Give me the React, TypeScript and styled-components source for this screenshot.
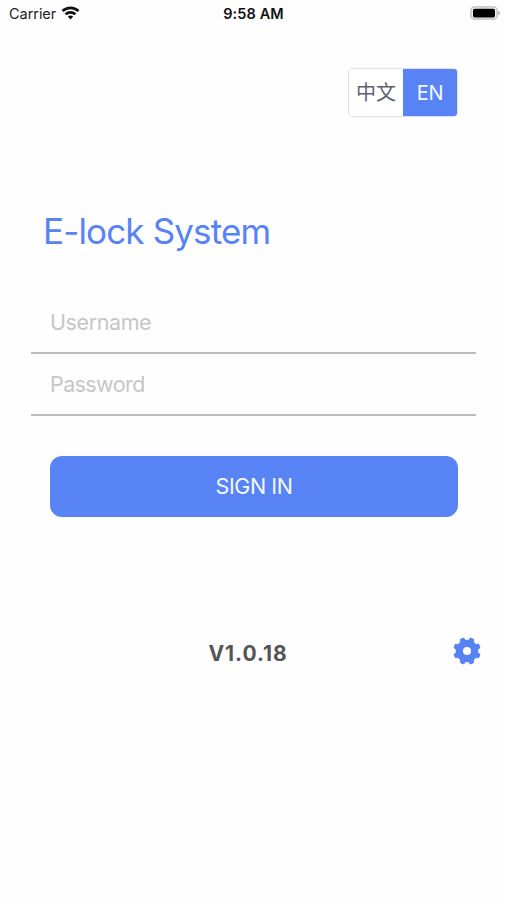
import React, { useState } from "react";
import styled, { createGlobalStyle } from "styled-components";

const BLUE = "#5783f5";

const GlobalStyle = createGlobalStyle`
  * { box-sizing: border-box; }
  body { margin: 0; background: #fefefe; font-family: Inter, "Noto Sans CJK SC", sans-serif; }
  button, input { font-family: inherit; }
`;

const Screen = styled.main`
  width: 507px;
  height: 900px;
  background: #fefefe;
  display: flex;
  flex-direction: column;
  overflow: hidden;
`;

const StatusBar = styled.header`
  height: 28px;
  padding: 0 6px 0 9px;
  display: grid;
  grid-template-columns: 1fr auto 1fr;
  align-items: center;
  color: #222;
  font-size: 14.5px;
  line-height: 28px;
`;

const Carrier = styled.div`
  display: flex;
  align-items: center;
  gap: 5px;
  letter-spacing: -0.05px;
  svg { margin-top: -3px; }
`;

const Clock = styled.time`
  font-weight: 600;
  letter-spacing: 0.12px;
  padding-right: 3px;
  color: #111;
`;

const BatterySlot = styled.div`
  display: flex;
  justify-content: flex-end;
  margin-top: -2px;
`;

const LanguageSwitch = styled.div`
  align-self: flex-end;
  display: flex;
  width: 110px;
  height: 49px;
  margin: 40px 49px 0 0;
  border: 1px solid #dfe1e6;
  border-radius: 4px;
  overflow: hidden;
`;

const LanguageOption = styled.button<{ $active: boolean }>`
  flex: 0 0 54px;
  padding: 0;
  border: 0;
  font-size: 20px;
  line-height: 46px;
  letter-spacing: ${(p) => (p.$active ? "-0.4px" : "0")};
  color: ${(p) => (p.$active ? "#f4f8ff" : "#5c626d")};
  background: ${(p) => (p.$active ? BLUE : "#fff")};
`;

const Title = styled.h1`
  margin: 92px 0 0 43px;
  font-size: 35px;
  line-height: 44px;
  font-weight: 400;
  letter-spacing: -0.85px;
  color: ${BLUE};
`;

const Form = styled.form`
  margin: 39px 31px 0;
  display: flex;
  flex-direction: column;
`;

const Field = styled.input<{ $tracking: number }>`
  height: 62px;
  padding: 0 19px;
  border: 0;
  border-bottom: 2px solid #bdbdbf;
  border-radius: 0;
  outline: 0;
  background: transparent;
  font-size: 21.5px;
  letter-spacing: ${(p) => p.$tracking}px;
  color: #444;
  &::placeholder { color: #c6c6c8; opacity: 1; }
`;

const SignIn = styled.button`
  height: 61px;
  margin: 39.5px 18px 0 19px;
  padding: 0;
  border: 0;
  border-radius: 12px;
  background: ${BLUE};
  color: #f4f8ff;
  font-size: 21.5px;
  letter-spacing: -0.4px;
`;

const Footer = styled.footer`
  display: grid;
  grid-template-columns: 1fr auto 1fr;
  align-items: center;
  margin: 116px 26px 0 15px;
  height: 32px;
`;

const Version = styled.span`
  grid-column: 2;
  font-size: 21px;
  font-weight: 700;
  line-height: 32px;
  letter-spacing: 0.95px;
  padding-top: 5px;
  color: #555;
`;

const SettingsButton = styled.button`
  justify-self: end;
  display: flex;
  padding: 0;
  border: 0;
  background: none;
`;

function WifiIcon() {
  return (
    <svg width="19" height="14" viewBox="0 0 18 14" fill="none" stroke="#111" strokeWidth="2.7">
      <path d="M1 5.1C5.5.8 12.5.8 17 5.1" />
      <path d="M4.1 8.3c2.8-2.6 7-2.6 9.8 0" />
      <path d="M9 13.4 6.3 10.6c1.5-1.4 3.9-1.4 5.4 0Z" fill="#111" stroke="none" />
    </svg>
  );
}

function BatteryIcon() {
  return (
    <svg width="31" height="14" viewBox="0 0 31 14">
      <rect x="0.9" y="0.9" width="26.2" height="12.2" rx="3.7" fill="#eee" stroke="#bbb" strokeWidth="1.3" />
      <rect x="3" y="2.7" width="22" height="8.8" rx="1.8" fill="#000" />
      <path d="M28.4 4.8c2 .7 2 3.7 0 4.4Z" fill="#aaa" />
    </svg>
  );
}

function GearIcon() {
  return (
    <svg width="28" height="28" viewBox="-14 -14 28 28" fill={BLUE}>
      <circle r="11.3" />
      {[22.5, 67.5, 112.5, 157.5].map((angle) => (
        <rect key={angle} x="-2.7" y="-13.9" width="5.4" height="27.8" rx="2.1" transform={`rotate(${angle})`} />
      ))}
      <circle r="4" fill="#fefefe" />
    </svg>
  );
}

export default function App() {
  const [language, setLanguage] = useState("EN");
  return (
    <>
      <GlobalStyle />
      <Screen>
        <StatusBar>
          <Carrier>Carrier <WifiIcon /></Carrier>
          <Clock>9:58 AM</Clock>
          <BatterySlot><BatteryIcon /></BatterySlot>
        </StatusBar>
        <LanguageSwitch>
          {["中文", "EN"].map((label) => (
            <LanguageOption key={label} $active={language === label} onClick={() => setLanguage(label)}>
              {label}
            </LanguageOption>
          ))}
        </LanguageSwitch>
        <Title>E-lock System</Title>
        <Form onSubmit={(e) => e.preventDefault()}>
          <Field placeholder="Username" $tracking={-0.4} />
          <Field placeholder="Password" type="password" $tracking={-0.6} />
          <SignIn type="submit">SIGN IN</SignIn>
        </Form>
        <Footer>
          <Version>V1.0.18</Version>
          <SettingsButton aria-label="Settings"><GearIcon /></SettingsButton>
        </Footer>
      </Screen>
    </>
  );
}
